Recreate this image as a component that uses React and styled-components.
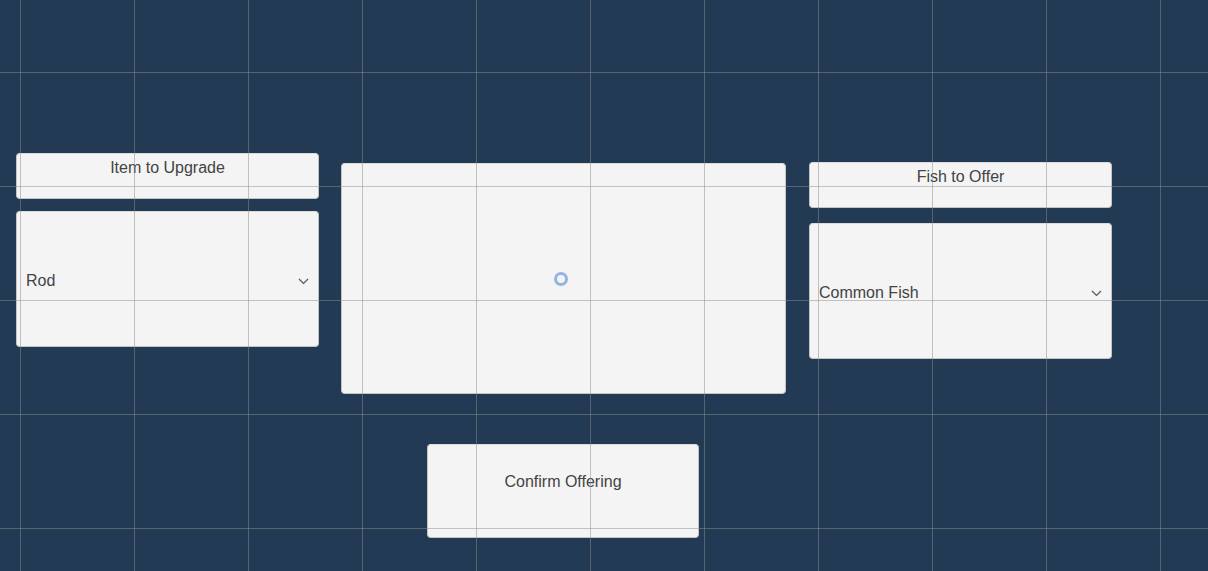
import React from "react";
import styled, { createGlobalStyle } from "styled-components";

const GlobalStyle = createGlobalStyle`
  html, body {
    margin: 0;
    padding: 0;
    height: 100%;
    background: #223a53;
    font-family: "Liberation Sans", Arial, sans-serif;
  }
  #root {
    min-height: 100%;
  }
`;

// scene view grid drawn over everything, like the editor does
const GridOverlay = styled.div`
  position: fixed;
  inset: 0;
  pointer-events: none;
  background-image:
    linear-gradient(to right, rgba(140, 140, 140, 0.5) 1px, transparent 1px),
    linear-gradient(to bottom, rgba(140, 140, 140, 0.5) 1px, transparent 1px);
  background-size: 114px 114px;
  background-position: 20px 72px;
`;

const Page = styled.div`
  box-sizing: border-box;
  width: 1208px;
  height: 571px;
  padding: 153px 0 0 16px;
  overflow: hidden;
`;

const Row = styled.div`
  display: flex;
  align-items: flex-start;
  gap: 22px;
`;

const Column = styled.div`
  display: flex;
  flex-direction: column;
  width: 303px;
  gap: ${(p) => p.$gap}px;
  margin-top: ${(p) => p.$top || 0}px;
  margin-left: ${(p) => p.$left || 0}px;
`;

const Panel = styled.div`
  box-sizing: border-box;
  background: #f4f4f4;
  border: 1px solid #c4c4c4;
  border-top-color: #dcdcdc;
  border-radius: 4px;
  color: #434343;
  font-size: 16px;
`;

const Header = styled(Panel)`
  height: ${(p) => p.$height || 46}px;
  padding-top: 4px;
  line-height: 19px;
  text-align: center;
`;

const Dropdown = styled(Panel)`
  height: 136px;
  display: flex;
  align-items: center;
  justify-content: space-between;
  padding: 3px 9px 0 9px;
`;

const Chevron = styled.svg`
  width: 11px;
  height: 7px;
  margin-top: 1px;
`;

const Preview = styled(Panel)`
  width: 445px;
  height: 231px;
  margin-top: 10px;
  display: flex;
  align-items: center;
  justify-content: center;
`;

const Spinner = styled.div`
  box-sizing: border-box;
  width: 14px;
  height: 14px;
  border-radius: 50%;
  border: 3.5px solid #93b3e2;
  margin-right: 5px;
`;

const ConfirmButton = styled(Panel)`
  width: 272px;
  height: 94px;
  margin: 50px 0 0 411px;
  display: flex;
  align-items: center;
  justify-content: center;
  padding-bottom: 18px;
`;

const Select = ({ value }) => (
  <Dropdown>
    <span>{value}</span>
    <Chevron viewBox="0 0 11 7" fill="none">
      <path d="M1 1l4.5 4.5L10 1" stroke="#555" strokeWidth="1.2" />
    </Chevron>
  </Dropdown>
);

export default function App() {
  return (
    <>
      <GlobalStyle />
      <Page>
        <Row>
          <Column $gap={12}>
            <Header>Item to Upgrade</Header>
            <Select value="Rod" />
          </Column>
          <Preview>
            <Spinner />
          </Preview>
          <Column $gap={15} $top={9} $left={1}>
            <Header $height={46}>Fish to Offer</Header>
            <Select value="Common Fish" />
          </Column>
        </Row>
        <ConfirmButton>Confirm Offering</ConfirmButton>
      </Page>
      <GridOverlay />
    </>
  );
}
